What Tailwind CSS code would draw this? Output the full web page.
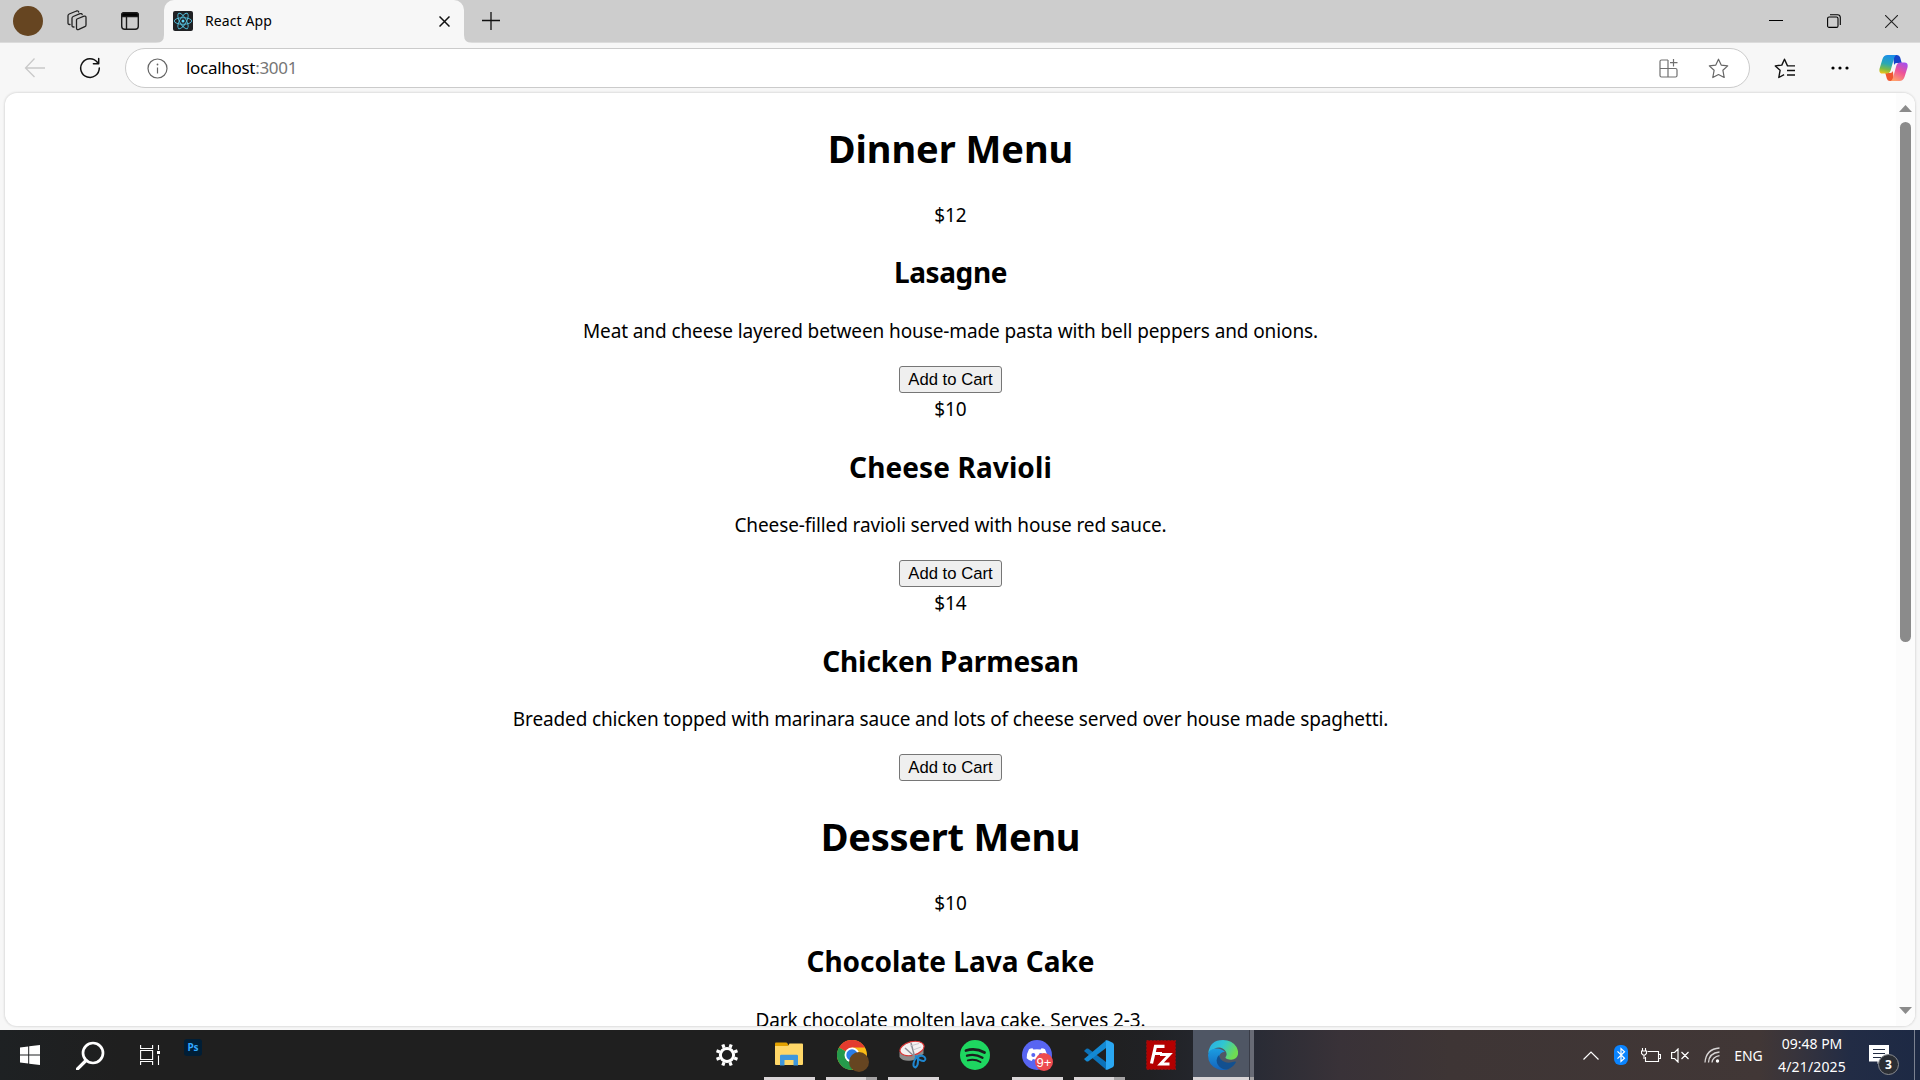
<!DOCTYPE html>
<html lang="en">
<head>
<meta charset="utf-8">
<title>React App</title>
<script src="https://cdn.jsdelivr.net/npm/@tailwindcss/browser@4"></script>
</head>
<body class="flex h-screen w-screen flex-col overflow-hidden bg-[#f7f7f7] font-['Noto_Sans',sans-serif] text-black">

<!-- Title bar -->
<header class="flex h-[43px] shrink-0 border-b border-[#dcdcdc] bg-[#cdcdcd]">
  <div class="flex w-[156px] items-center pl-[13px]">
    <div class="size-[30px] rounded-full bg-[#664521]"></div>
    <svg class="ml-[23px] size-[24px]" viewBox="0 0 24 24" fill="none" stroke="#222" stroke-width="1.3" stroke-linejoin="round" stroke-linecap="round">
      <path d="M11 10l7-2.800q2-.6 2 1.400v7.400q0 1.200-1.200 1.700l-6 2.700q-2.300.8-2.300-1.400v-8q0-.7.5-1z"/>
      <path d="M8 18q-2 .2-2-1.600V9.200q0-1.200 1.200-1.700l6.800-2.800q1.800-.5 2.200 1"/>
      <path d="M4 15.500q-2 .2-2-1.600V6.700q0-1.200 1.200-1.700l7.300-3q1.800-.5 2.200 1"/>
    </svg>
    <svg class="ml-[30px] size-[20px]" viewBox="0 0 20 20" fill="none" stroke="#1a1a1a" stroke-width="1.400">
      <rect x="1.700" y="1.700" width="16.600" height="16.600" rx="3"/><path d="M1.700 5.500V4q0-2.300 2.300-2.300h12q2.300 0 2.300 2.300v1.500z" fill="#000"/><path d="M6.500 6v12"/>
    </svg>
  </div>
  <svg class="-mb-px mt-auto size-2 shrink-0" viewBox="0 0 8 8"><path d="M8 0v8H0q8 0 8-8" fill="#f7f7f7"/></svg>
  <div class="-mb-px flex w-[300px] items-center rounded-t-[10px] bg-[#f7f7f7] pb-px pl-[9px]">
    <svg class="size-5" viewBox="0 0 20 20" fill="none" stroke="#53bfdc" stroke-width=".9">
      <rect width="20" height="20" rx="2" fill="#202124" stroke="none"/>
      <circle cx="10" cy="10" r="1.500" fill="#61dafb" stroke="none"/>
      <ellipse cx="10" cy="10" rx="8.700" ry="3.300"/><ellipse cx="10" cy="10" rx="8.700" ry="3.300" transform="rotate(60 10 10)"/><ellipse cx="10" cy="10" rx="8.700" ry="3.300" transform="rotate(120 10 10)"/>
    </svg>
    <span class="ml-3 pb-0.5 text-[14px] tracking-[0.1px]">React App</span>
    <svg class="ml-auto mr-[14px] size-[11px]" viewBox="0 0 11 11" stroke="#111" stroke-width="1.500"><path d="M.5.5l10 10M10.500.5l-10 10"/></svg>
  </div>
  <svg class="-mb-px mt-auto size-2 shrink-0" viewBox="0 0 8 8"><path d="M0 0v8h8Q0 8 0 0" fill="#f7f7f7"/></svg>
  <svg class="ml-[10px] mt-[12px] size-[18px]" viewBox="0 0 18 18" stroke="#111" stroke-width="1.300"><path d="M0 8.500h18M9 0v18"/></svg>
  <div class="ml-auto flex items-center pr-[22px]">
    <svg class="h-[14px] w-[14px]" viewBox="0 0 14 14" stroke="#000" stroke-width="1"><path d="M0 6.500h14"/></svg>
    <svg class="ml-[44px] h-[14px] w-[14px]" viewBox="0 0 14 14" fill="none" stroke="#000" stroke-width="1.100"><rect x=".6" y="3" width="10.400" height="10.400" rx="1.500"/><path d="M3 .7h7.500q2.800 0 2.800 2.800V11"/></svg>
    <svg class="ml-[44px] h-[13px] w-[13px]" viewBox="0 0 13 13" stroke="#222" stroke-width="1.100"><path d="M0 0l13 13M13 0L0 13"/></svg>
  </div>
</header>

<!-- Toolbar -->
<div class="flex h-[50px] shrink-0 items-center pl-6 pr-3">
  <svg class="size-[22px]" viewBox="0 0 22 22" fill="none" stroke="#c9c9c9" stroke-width="1.300"><path d="M10.500 1.500L1.500 11l9 9M1.500 11H21"/></svg>
  <svg class="ml-[33px] size-[22px]" viewBox="0 0 22 22" fill="none" stroke="#111" stroke-width="1.500" stroke-linecap="round" stroke-linejoin="round"><path d="M20.300 11a9.300 9.300 0 1 1-2-5.700l1.200 1.500M19.700 1.500v5.300h-5.300"/></svg>
  <div class="ml-[24px] flex h-10 w-[1625px] items-center rounded-full border border-[#cbcbcb] bg-white pl-[21px] pr-[20px]">
    <svg class="size-[21px]" viewBox="0 0 21 21" fill="none" stroke="#666" stroke-width="1.200"><circle cx="10.500" cy="10.500" r="9.500"/><path d="M10.500 9.500v6"/><circle cx="10.500" cy="6.500" r=".9" fill="#666" stroke="none"/></svg>
    <div class="ml-[18px] pb-px text-[17px] leading-none tracking-[-0.3px]"><span>localhost</span><span class="text-[#767676]">:3001</span></div>
    <svg class="ml-auto size-[19px]" viewBox="0 0 19 19" fill="none" stroke="#707070" stroke-width="1.200"><path d="M9 1H2.500Q1 1 1 2.500v14Q1 18 2.500 18h14q1.500 0 1.500-1.500V11q0-1.500-1.500-1.500H1M9 1v17M14.500 0v7.500M11 3.700h7.500"/></svg>
    <svg class="ml-[30px] size-[21px]" viewBox="0 0 21 21" fill="none" stroke="#666" stroke-width="1.200" stroke-linejoin="round"><path d="M10.500 1.200l2.700 5.900 6.500.8-4.800 4.400 1.300 7.200-5.700-3-5.700 3 1.300-7.200L1.300 7.900l6.500-.8z"/></svg>
  </div>
  <svg class="ml-[24px] size-[21px]" viewBox="0 0 21 21" fill="none" stroke="#111" stroke-width="1.400" stroke-linejoin="round"><path d="M20 7.900h-6.500l-3-6.700-2.700 5.900-6.500.8 4.800 4.400-1.300 7.200 5.300-2.800M13.500 7.900H21M13 12.500h8M13 17h8"/></svg>
  <svg class="ml-[36px] h-[4px] w-[18px]" viewBox="0 0 18 4"><circle cx="2" cy="2" r="1.600"/><circle cx="9" cy="2" r="1.600"/><circle cx="16" cy="2" r="1.600"/></svg>
  <svg class="ml-auto h-[26px] w-[29px]" viewBox="0 0 29 26">
    <defs>
      <linearGradient id="ca" x1=".4" y1="0" x2=".2" y2="1"><stop offset="0" stop-color="#1b8fe8"/><stop offset=".45" stop-color="#2aa8b4"/><stop offset=".75" stop-color="#7dbb45"/><stop offset="1" stop-color="#f2c41a"/></linearGradient>
      <linearGradient id="cb" x1=".8" y1="0" x2=".3" y2="1"><stop offset="0" stop-color="#a450ee"/><stop offset=".5" stop-color="#ee5397"/><stop offset="1" stop-color="#ffa06b"/></linearGradient>
    </defs>
    <path d="M14 0h4q2.500 0 3.200 2.500l1.500 5.500h-5q-2 0-2.600 2z" fill="#1644c9"/>
    <path d="M15 26h-4q-2.500 0-3.200-2.500L6.300 18h5q2 0 2.600-2z" fill="#f0562f"/>
    <path d="M8.500 0h9q-1.700.5-2.400 3l-3.500 12.500q-.9 3-4 3H3.500Q-.5 18.500.6 13.500L3.500 4Q4.800 0 8.500 0z" fill="url(#ca)"/>
    <path d="M20.500 26h-9q1.700-.5 2.400-3l3.500-12.500q.9-3 4-3h4q4.100 0 3.100 5L25.500 22q-1.300 4-5 4z" fill="url(#cb)"/>
  </svg>
</div>

<!-- Page -->
<main class="mx-[5px] flex h-[933px] shrink-0 overflow-hidden rounded-[12px] bg-white shadow-[0_0_2px_1px_#dedede]">
  <div class="flex flex-1 flex-col items-center overflow-hidden pt-[28px] text-[19px] leading-[27px] tracking-[-0.11px]">
    <h1 class="h-[53px] text-[38px] font-bold leading-[54px] tracking-[-0.05px]">Dinner Menu</h1>
    <section class="mt-[28px] flex h-[194px] shrink-0 flex-col items-center">
      <p>$12</p>
      <h2 class="mt-[24px] h-10 text-[28px] font-bold leading-[39px] tracking-[-0.4px]">Lasagne</h2>
      <p class="mt-[25px]">Meat and cheese layered between house-made pasta with bell peppers and onions.</p>
      <button class="mt-[21px] h-[27px] w-[103px] rounded-[3px] border border-[#767676] bg-[#efefef] pb-px font-['Liberation_Sans',sans-serif] text-[16.67px] leading-[23px] tracking-normal">Add to Cart</button>
    </section>
    <section class="flex h-[194px] shrink-0 flex-col items-center">
      <p>$10</p>
      <h2 class="mt-[24px] h-10 text-[28px] font-bold leading-10 tracking-[0.1px]">Cheese Ravioli</h2>
      <p class="mt-[25px]">Cheese-filled ravioli served with house red sauce.</p>
      <button class="mt-[21px] h-[27px] w-[103px] rounded-[3px] border border-[#767676] bg-[#efefef] pb-px font-['Liberation_Sans',sans-serif] text-[16.67px] leading-[23px] tracking-normal">Add to Cart</button>
    </section>
    <section class="flex h-[194px] shrink-0 flex-col items-center">
      <p>$14</p>
      <h2 class="mt-[24px] h-10 text-[28px] font-bold leading-10 tracking-[-0.1px]">Chicken Parmesan</h2>
      <p class="mt-[25px] tracking-[-0.135px]">Breaded chicken topped with marinara sauce and lots of cheese served over house made spaghetti.</p>
      <button class="mt-[21px] h-[27px] w-[103px] rounded-[3px] border border-[#767676] bg-[#efefef] pb-px font-['Liberation_Sans',sans-serif] text-[16.67px] leading-[23px] tracking-normal">Add to Cart</button>
    </section>
    <h1 class="mt-[25px] h-[53px] shrink-0 text-[38px] font-bold leading-[54px] tracking-[-0.25px]">Dessert Menu</h1>
    <section class="mt-[28px] flex h-[194px] shrink-0 flex-col items-center">
      <p>$10</p>
      <h2 class="mt-[24px] h-10 text-[28px] font-bold leading-10 tracking-normal">Chocolate Lava Cake</h2>
      <p class="mt-[26px]">Dark chocolate molten lava cake. Serves 2-3.</p>
    </section>
  </div>
  <div class="flex w-[19px] flex-col items-center bg-[#fcfcfc] pt-[12px] pb-[12px]">
    <svg class="h-[7px] w-[13px]" viewBox="0 0 13 7"><path d="M6.500 0L13 7H0z" fill="#8b8b8b"/></svg>
    <div class="mt-[10px] h-[520px] w-[11px] rounded-full bg-[#8b8b8b]"></div>
    <svg class="mt-auto h-[7px] w-[13px]" viewBox="0 0 13 7"><path d="M6.500 7L13 0H0z" fill="#8b8b8b"/></svg>
  </div>
</main>
<div class="h-1 shrink-0"></div>

<!-- Taskbar -->
<footer class="flex h-[50px] shrink-0 bg-[linear-gradient(90deg,#1e2123_0px,#1f1f1f_120px,#1f1f1f_1080px,#202124_1150px,#282b35_1250px,#393238_1340px,#3e3535_1450px,#413736_1760px,#38343c_1795px,#222c45_1850px,#1d2944_1920px)] text-[14px] text-white">
  <div class="flex w-[696px] items-center">
    <svg class="ml-5 size-5" viewBox="0 0 20 20" fill="#fff"><path d="M0 2.500L8.200 1.400V9.500H0zM9.200 1.300L20 0v9.500H9.200zM0 10.500h8.200v8.100L0 17.500zM9.200 10.500H20V20L9.200 18.700z"/></svg>
    <svg class="ml-[36px] size-[29px]" viewBox="0 0 29 29" fill="none" stroke="#fff"><circle cx="17" cy="12" r="10" stroke-width="2.700"/><path d="M10 19.500L1.500 28" stroke-width="3.200" stroke-linecap="round"/></svg>
    <svg class="ml-[35px] h-[20px] w-[20px]" viewBox="0 0 20 20" fill="none" stroke="#fff" stroke-width="1.100"><path d="M.6 0v3.500h12V0M.6 20v-3.500h12V20M.6 5.500h12v9H.6zM18.500 0v5M18.500 10.500V20"/><rect x="17" y="6" width="3" height="3" fill="#fff" stroke="none"/></svg>
    <div class="mb-[16px] ml-6 flex h-[17px] w-[18px] items-center justify-center rounded-[3px] bg-[#001e36] pb-px font-['Noto_Sans'] text-[10px] font-bold leading-none text-[#31a8ff]">Ps</div>
  </div>

  <div class="flex w-[62px] items-center justify-center">
    <svg class="size-[22px]" viewBox="-11 -11 22 22" fill="none" stroke="#fff"><circle r="6.600" stroke-width="3"/><path d="M3 7.200l1.200 3.300M-3 7.200l-1.200 3.300M3-7.200l1.200-3.300M-3-7.200l-1.200-3.300M7.200 3l3.300 1.200M7.200-3l3.300-1.200M-7.200 3l-3.300 1.200M-7.200-3l-3.300-1.200" stroke-width="3.200"/></svg>
  </div>
  <div class="flex w-[62px] flex-col items-center">
    <svg class="mt-[12px] h-[25px] w-[28px]" viewBox="0 0 28 25"><path d="M0 5V1.500Q0 .5 1 .5h10q1 0 1.500 1l1 2V5z" fill="#e2a100"/><path d="M0 4h13l1.500-2.500H27q1 0 1 1V22q0 1-1 1H1q-1 0-1-1z" fill="#ffd768"/><path d="M5 23.500V14q0-1.300 1.300-1.300h15.400Q23 12.700 23 14v9.500h-4.500V18h-9v5.500z" fill="#3f97dc"/></svg>
    <div class="mt-auto h-[3px] w-[51px] bg-[#d9d5d7]"></div>
  </div>
  <div class="flex w-[62px] flex-col items-center">
    <svg class="ml-[3px] mt-[10px] h-[32px] w-[32px]" viewBox="0 0 32 32"><circle cx="15" cy="15" r="15" fill="#fbbc16"/><path d="M15 15L2 7.500A15 15 0 0 1 28 7.500H15z" fill="#e33b2e"/><path d="M2 7.500A15 15 0 0 0 15 30l6.500-11L15 15z" fill="#259a4b"/><circle cx="15" cy="15" r="7.500" fill="#fff"/><circle cx="15" cy="15" r="5.700" fill="#2a7de8"/><circle cx="22" cy="22" r="10" fill="#664521"/></svg>
    <div class="mt-auto flex h-[3px] w-[51px]"><div class="w-10 bg-[#d9d5d7]"></div><div class="flex-1 bg-[#a5a3a4]"></div></div>
  </div>
  <div class="flex w-[62px] flex-col items-center">
    <svg class="mt-[10px] h-[30px] w-[28px]" viewBox="0 0 28 30"><path d="M.5 12v5q4 5 12 3.500t12-7V7z" fill="#8c8c8c"/><ellipse cx="13" cy="8.500" rx="12.300" ry="6.800" transform="rotate(-14 13 8.500)" fill="#f4f1f2" stroke="#d93535" stroke-width="1.200"/><path d="M12 3l3.500 13M6 8l9 8" stroke="#8d8d95" stroke-width="1.500"/><path d="M11 6l9-2.500M14 10l8-3" stroke="#c3c3c8" stroke-width=".9"/><g fill="none" stroke="#1f86cf" stroke-width="2"><path d="M16 16q3.500 1 3 5.500 0 4-2.500 6-2.500-.5-2-4t3.500-7"/><path d="M17 17.500q5-3.500 8.500-.5 2 2.500-.5 4-3 .5-7.500-3.500"/></g></svg>
    <div class="mt-auto h-[3px] w-[51px] bg-[#d9d5d7]"></div>
  </div>
  <div class="flex w-[62px] items-center justify-center">
    <svg class="size-[30px]" viewBox="0 0 30 30"><circle cx="15" cy="15" r="15" fill="#1ed760"/><g fill="none" stroke="#1b1f1d" stroke-linecap="round"><path d="M6 10.500q9.500-3 18.500 2" stroke-width="2.800"/><path d="M7 15.700q8-2.300 15.500 2" stroke-width="2.300"/><path d="M7.800 20.400q6.800-1.800 12.700 1.600" stroke-width="1.900"/></g></svg>
  </div>
  <div class="flex w-[62px] flex-col items-center">
    <div class="relative mt-[10px] size-[30px]">
      <svg class="size-[30px]" viewBox="0 0 30 30"><circle cx="15" cy="15" r="15" fill="#5865f2"/><path d="M10.500 8.200q-2 .2-3.500 1-2.300 4-2.300 9 2 2.100 5 2.800l1.200-2q4.100 1 8.200 0l1.200 2q3-.7 5-2.800 0-5-2.300-9-1.500-.8-3.500-1l-.9 1.300q-3.600-.6-7.200 0z" fill="#fff"/><circle cx="11.300" cy="15" r="2" fill="#5865f2"/><circle cx="18.700" cy="15" r="2" fill="#5865f2"/></svg>
      <div class="absolute left-[13px] top-[13px] flex size-[18px] items-center justify-center rounded-full bg-[#ed4b50] font-['Liberation_Sans'] text-[13px] leading-none">9+</div>
    </div>
    <div class="mt-auto h-[3px] w-[51px] bg-[#d9d5d7]"></div>
  </div>
  <div class="flex w-[62px] flex-col items-center">
    <svg class="mt-[10px] size-[30px]" viewBox="0 0 30 30"><path d="M0 11l2.300-2.200q1-.8 2.200 0L22 22v7.500z" fill="#0c72b8"/><path d="M0 19l2.300 2.200q1 .8 2.200 0L22 8V.5z" fill="#1389d3"/><path d="M21.500.3Q23 0 24 .5l4.700 2.300Q30 3.500 30 5v20q0 1.500-1.300 2.200L24 29.500q-1 .5-2.500.2Q22 29 22 28V2q0-1-.5-1.700z" fill="#2aa7f2"/></svg>
    <div class="mt-auto flex h-[3px] w-[51px]"><div class="w-10 bg-[#d9d5d7]"></div><div class="flex-1 bg-[#a5a3a4]"></div></div>
  </div>
  <div class="flex w-[63px] items-center justify-center pr-px">
    <svg class="size-[30px]" viewBox="0 0 30 30"><rect x=".6" y=".6" width="28.800" height="28.800" fill="#b40000" stroke="#8d1010" stroke-width="1.200" stroke-dasharray="2 1.500"/><g fill="none" stroke="#fff" stroke-width="3.200"><path d="M18.500 6.300H9.500L5.500 23.500M8.500 13.500h7.500"/><path d="M14 14.500h9.500L14.500 24h9" stroke-width="2.900"/></g></svg>
  </div>
  <div class="flex w-[56px] flex-col items-center bg-[#4f5664] pl-[3px]">
    <svg class="mt-[10px] size-[30px]" viewBox="0 0 30 30">
      <defs><linearGradient id="ea" x1="0" y1="0" x2="1" y2=".4"><stop offset="0" stop-color="#2aa9e6"/><stop offset=".5" stop-color="#30c6d2"/><stop offset="1" stop-color="#6fdc52"/></linearGradient><linearGradient id="eb" x1="0" y1="0" x2="0" y2="1"><stop offset="0" stop-color="#1b9de2"/><stop offset="1" stop-color="#1464bd"/></linearGradient></defs>
      <path d="M.2 13Q2 0 15 0q9 0 13.500 7 3.500 7-.5 11-3.500 3-9 1-2.500-1-1-2.600 1.500-2.400-.5-5.400-6-8-17.300 2z" fill="url(#ea)"/>
      <path d="M0 15Q.5 8.500 8.500 8.500q5.500 0 8.500 3.500-4-.5-5.500 3.500-1.500 6 4 11 2 2.300 4.500 2.700-5 1.800-10 0Q0 25.500 0 15z" fill="url(#eb)"/>
      <path d="M11.500 14.500Q6.500 19 10 25q4 5.500 10 4.200 5-2 7.800-6.700.5-1.300-1-.9-9 3.200-14.200-2.600-2-2.500-1.100-4.500z" fill="#125090"/>
    </svg>
    <div class="-ml-[3px] mt-auto h-[3px] w-[56px] bg-[#d9d5d7]"></div>
  </div>
  <div class="flex w-[5px] flex-col border-l border-[#393c47] bg-[#686b75]"><div class="mt-auto h-[3px] bg-[#a5a3a4]"></div></div>

  <div class="ml-auto flex items-center">
    <svg class="h-[9px] w-[16px]" viewBox="0 0 16 9" fill="none" stroke="#fff" stroke-width="1.200"><path d="M.5 8.500L8 1l7.500 7.500"/></svg>
    <svg class="ml-[15px] h-[20px] w-[14px]" viewBox="0 0 14 20"><rect width="14" height="20" rx="6" fill="#0a84ff"/><path d="M3.500 6.300l7 7L7 16.500v-13l3.500 3.200-7 7" fill="none" stroke="#fff" stroke-width="1.200"/></svg>
    <svg class="ml-[13px] h-[15px] w-[20px]" viewBox="0 0 20 15" fill="none" stroke="#fff" stroke-width="1.100"><path d="M6.500 3.500h11v10h-13V9M18 6.500h1.500v4H18M1.500 0v3M4.500 0v3M3 7v4"/><path d="M.5 3h5v2.500L4 7H2L.5 5.500z"/></svg>
    <svg class="ml-[10px] h-[15px] w-[18px]" viewBox="0 0 18 15" fill="none" stroke="#fff" stroke-width="1.200"><path d="M.6 4.500h3L7 1v13l-3.400-3.500h-3zM10.500 4l7 7M17.500 4l-7 7"/></svg>
    <svg class="ml-[15px] h-[16px] w-[16px]" viewBox="0 0 16 16" fill="none" stroke="#d8d5d5" stroke-width="1.300"><path d="M1 15.500Q2 2 15.500 1" /><path d="M4.500 15.500Q5 6 15.500 5"/><path d="M8 15.500Q8.500 10 15.500 8.700"/><circle cx="13.500" cy="14" r="1.700" fill="#fff" stroke="none"/></svg>
    <span class="ml-[14px] w-[29px] text-center">ENG</span>
    <div class="ml-[14px] flex w-[70px] flex-col pb-px text-center leading-[23px]"><span>09:48 PM</span><span class="tracking-[0.15px]">4/21/2025</span></div>
    <div class="relative ml-[22px] h-[30px] w-[31px]">
      <svg class="mt-[5px] h-[20px] w-[20px]" viewBox="0 0 20 20"><path d="M0 0h20v16.500h-9.500L8.500 19v-2.500H0z" fill="#fff"/><path d="M4 4.500h12M4 8.500h12M4 12.500h8" stroke="#222c42" stroke-width="1.100"/></svg>
      <div class="absolute left-[9px] top-[14px] flex size-[21px] items-center justify-center rounded-full border border-[#898b8f] bg-[#2b2e34] text-[12px] font-bold leading-none">3</div>
    </div>
    <div class="ml-[14px] mr-[5px] h-[50px] w-px bg-[#7b8190]"></div>
  </div>
</footer>
</body>
</html>
